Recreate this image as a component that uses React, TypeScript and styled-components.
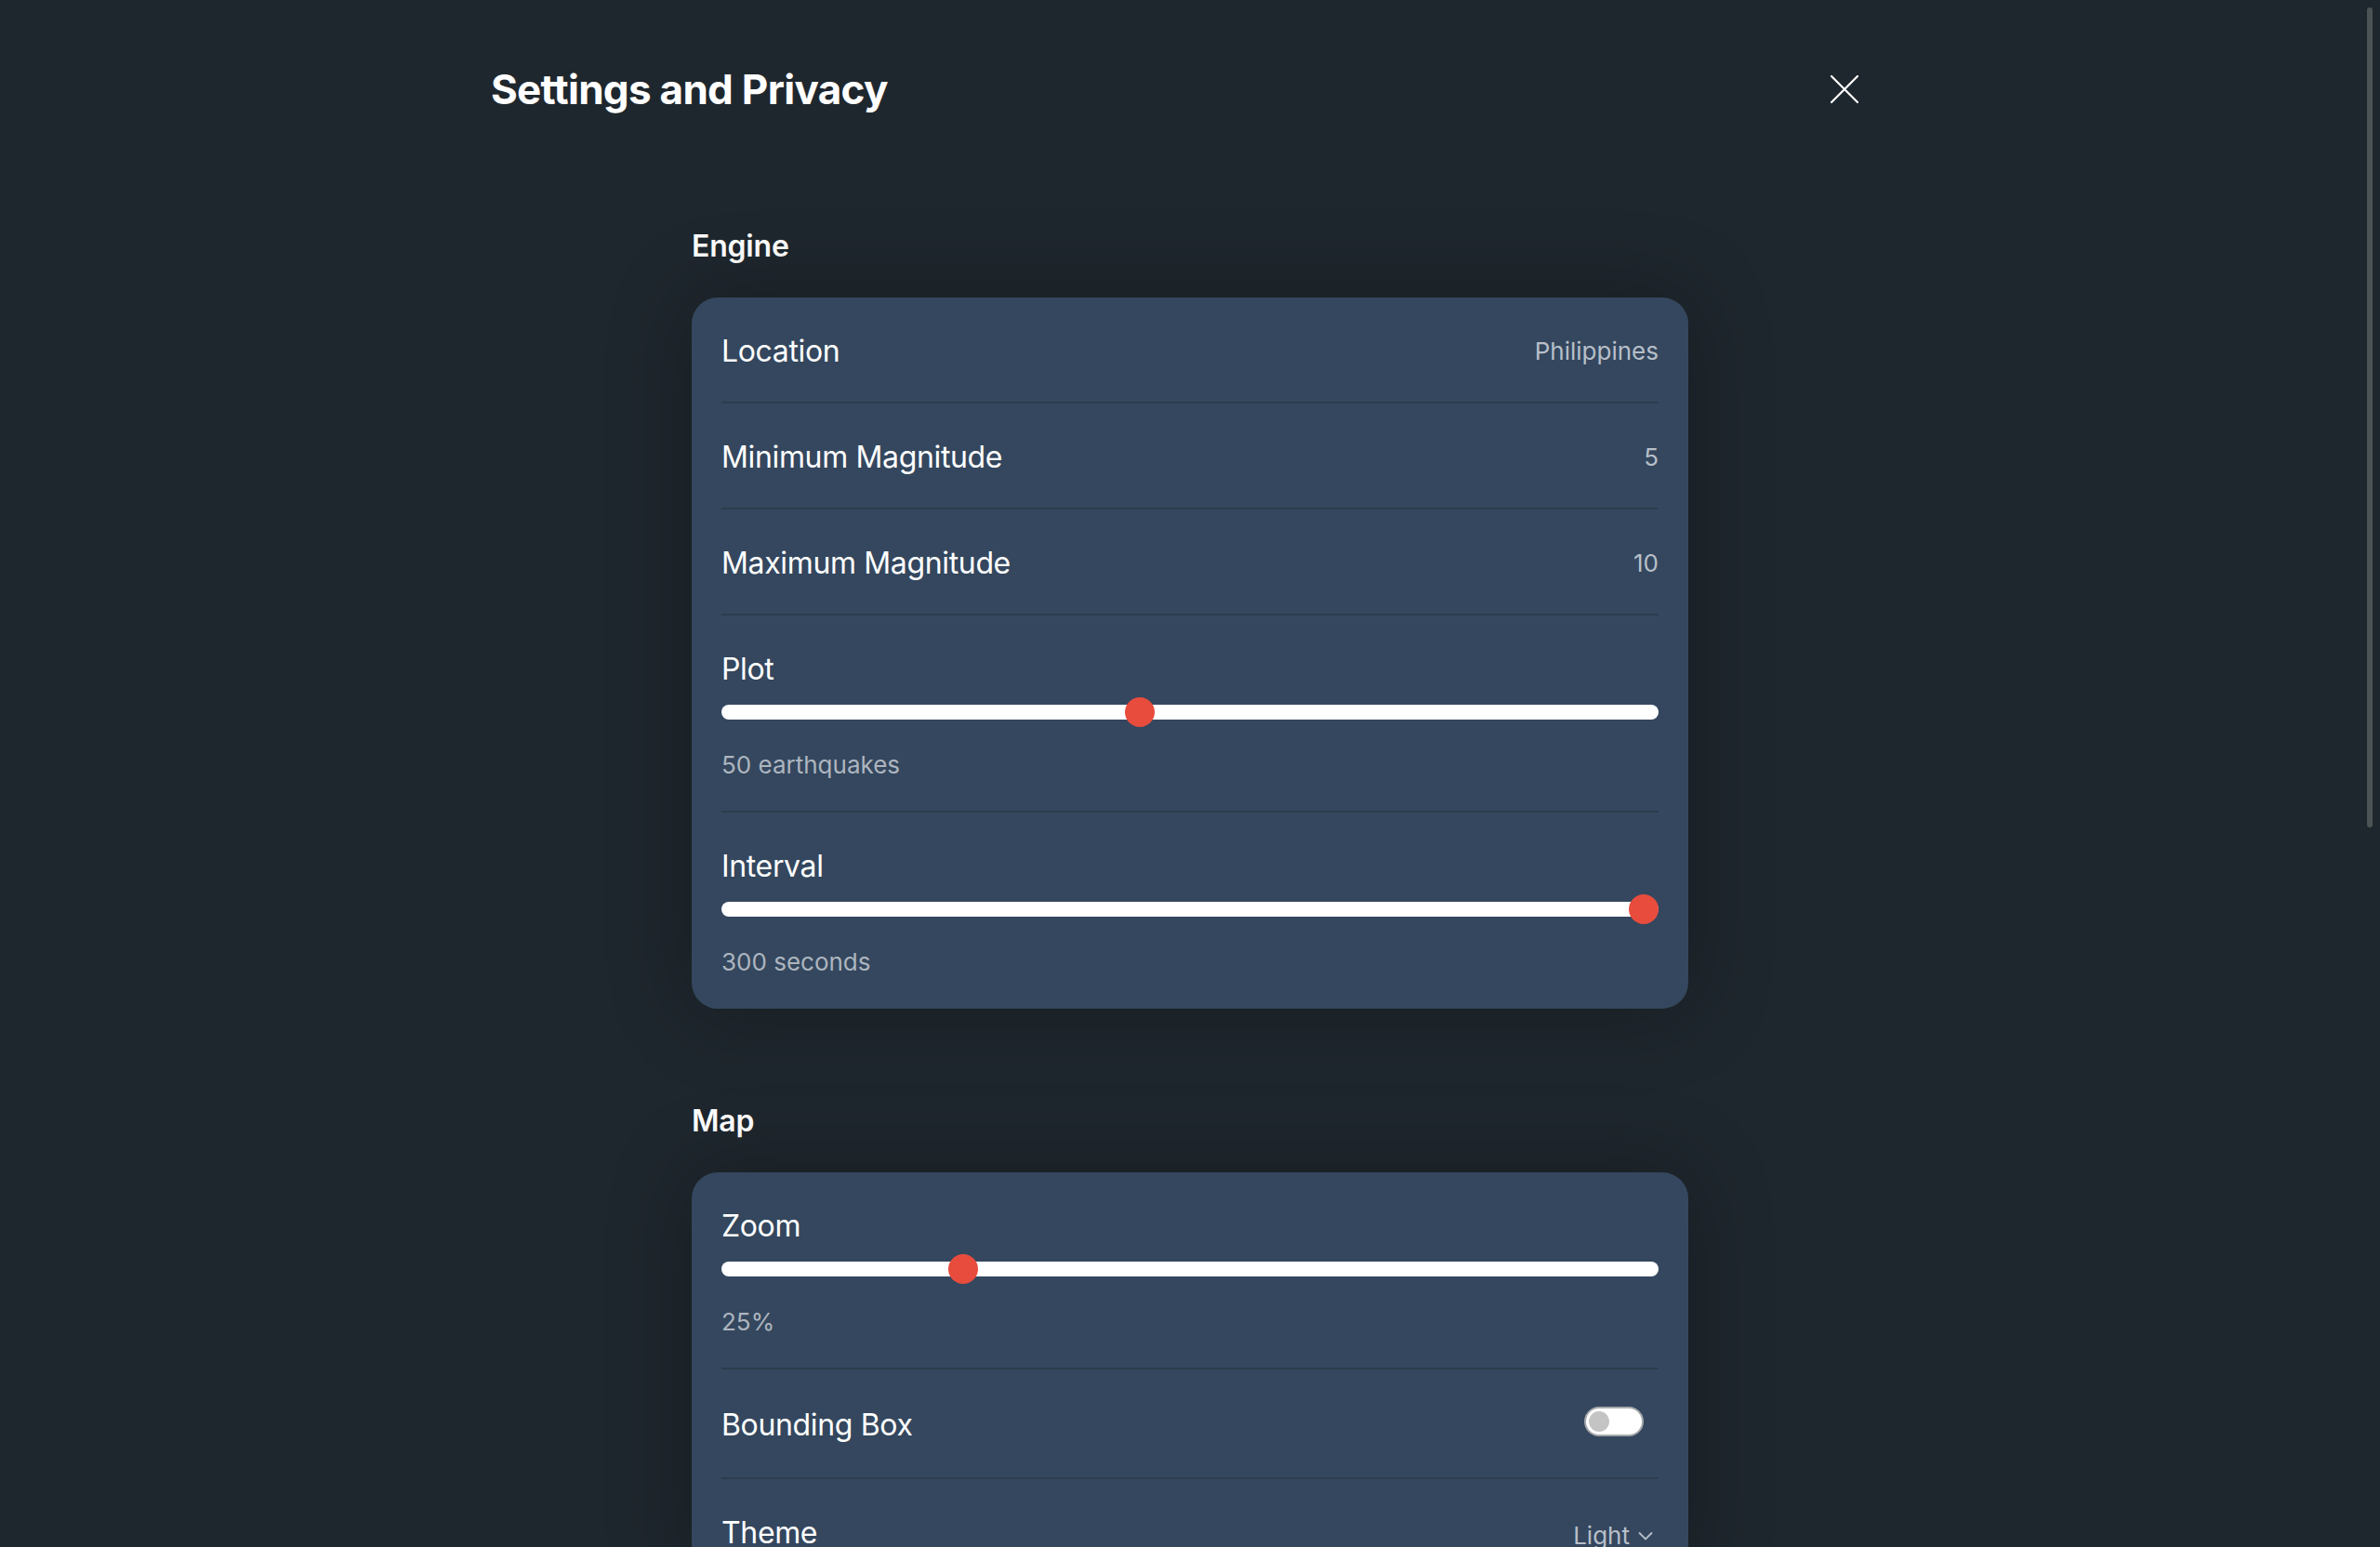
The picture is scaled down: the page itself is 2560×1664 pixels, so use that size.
import React from 'react';
import styled, { createGlobalStyle } from 'styled-components';

const GlobalStyle = createGlobalStyle`
  * {
    box-sizing: border-box;
  }
  html,
  body {
    margin: 0;
    padding: 0;
    background: #1f272e;
  }
  body {
    font-family: 'Inter', 'Noto Sans', sans-serif;
    color: #ffffff;
    -webkit-font-smoothing: antialiased;
  }
`;

const engineRows = [
  { id: 'location', title: 'Location', value: 'Philippines' },
  { id: 'min', title: 'Minimum Magnitude', value: '5' },
  { id: 'max', title: 'Maximum Magnitude', value: '10' },
];

const App: React.FC = () => {
  return (
    <Page>
      <GlobalStyle />
      <Header>
        <Title>Settings and Privacy</Title>
        <CloseButton aria-label="Close">
          <svg width="30" height="30" viewBox="0 0 30 30" fill="none">
            <path
              d="M1 1L29 29M29 1L1 29"
              stroke="#ffffff"
              strokeWidth="2.2"
              strokeLinecap="square"
            />
          </svg>
        </CloseButton>
      </Header>

      <Content>
        <Section>
          <SectionTitle>Engine</SectionTitle>
          <Card>
            {engineRows.map(row => (
              <Row key={row.id}>
                <Label>{row.title}</Label>
                <Value>{row.value}</Value>
              </Row>
            ))}
            <SliderRow>
              <Label>Plot</Label>
              <Range min={10} max={100} defaultValue={50} />
              <SubText>50 earthquakes</SubText>
            </SliderRow>
            <SliderRow>
              <Label>Interval</Label>
              <Range min={30} max={300} step={30} defaultValue={300} />
              <SubText>300 seconds</SubText>
            </SliderRow>
          </Card>
        </Section>

        <Section>
          <SectionTitle>Map</SectionTitle>
          <Card>
            <SliderRow>
              <Label>Zoom</Label>
              <Range min={0} max={100} defaultValue={25} />
              <SubText>25%</SubText>
            </SliderRow>
            <Row>
              <Label>Bounding Box</Label>
              <Switch role="switch" aria-checked={false} />
            </Row>
            <Row>
              <Label>Theme</Label>
              <Select>
                Light
                <svg width="16" height="10" viewBox="0 0 16 10" fill="none">
                  <path
                    d="M1 1.5L8 8.5L15 1.5"
                    stroke="#b7bfc9"
                    strokeWidth="1.8"
                  />
                </svg>
              </Select>
            </Row>
          </Card>
        </Section>
      </Content>

      <ScrollThumb />
    </Page>
  );
};

const Page = styled.div`
  position: relative;
  height: 100vh;
  overflow: hidden;
  background: #1f272e;
`;

const Header = styled.header`
  width: 1504px;
  margin: 0 auto;
  padding-top: 48px;
  display: flex;
  align-items: center;
  justify-content: space-between;
`;

const Title = styled.h1`
  margin: 0;
  font-size: 44px;
  font-weight: 700;
  line-height: 96px;
  letter-spacing: -0.7px;
`;

const CloseButton = styled.button`
  width: 96px;
  height: 96px;
  padding: 0;
  border: 0;
  background: none;
  display: flex;
  align-items: center;
  justify-content: center;
  cursor: pointer;
`;

const Content = styled.main`
  width: 1072px;
  margin: 101px auto 0;
  display: flex;
  flex-direction: column;
  gap: 101px;
`;

const Section = styled.section`
  display: flex;
  flex-direction: column;
`;

const SectionTitle = styled.h2`
  margin: 0 0 35px;
  font-size: 32px;
  font-weight: 600;
  line-height: 40px;
  letter-spacing: -0.2px;
`;

const Card = styled.div`
  background: #34475e;
  border-radius: 28px;
  padding: 0 32px;
  box-shadow: 0 0 90px rgba(0, 0, 0, 0.3);
`;

const Row = styled.div`
  display: flex;
  align-items: center;
  justify-content: space-between;
  padding: 38px 0 34px;
  border-bottom: 2px solid #2d3c4e;

  &:last-child {
    border-bottom: none;
  }
`;

const SliderRow = styled(Row)`
  flex-direction: column;
  align-items: stretch;
  justify-content: flex-start;
  padding: 38px 0 33px;

  &:last-child {
    padding-bottom: 34px;
  }
`;

const Label = styled.div`
  font-size: 32px;
  line-height: 40px;
  font-weight: 400;
  letter-spacing: -0.35px;
  color: #ffffff;
`;

const Value = styled.div`
  font-size: 26px;
  line-height: 32px;
  color: #b7bfc9;
`;

const SubText = styled.div`
  margin-top: 25px;
  font-size: 26px;
  line-height: 32px;
  color: #adb5bf;
`;

const Range = styled.input.attrs({ type: 'range' })`
  -webkit-appearance: none;
  appearance: none;
  display: block;
  width: 100%;
  height: 32px;
  margin: 10px 0 0;
  padding: 0;
  background: transparent;

  &::-webkit-slider-runnable-track {
    height: 16px;
    border-radius: 8px;
    background: #ffffff;
  }

  &::-webkit-slider-thumb {
    -webkit-appearance: none;
    width: 32px;
    height: 32px;
    margin-top: -8px;
    border: none;
    border-radius: 50%;
    background: #e84c3d;
  }
`;

const Switch = styled.span`
  position: relative;
  width: 64px;
  height: 32px;
  margin: 2px 16px 10px 0;
  border-radius: 16px;
  background: #ffffff;
  border: 2px solid #a6a8ab;

  &::after {
    content: '';
    position: absolute;
    top: 3px;
    left: 3px;
    width: 22px;
    height: 22px;
    border-radius: 50%;
    background: #c4c4c4;
  }
`;

const Select = styled.div`
  display: flex;
  align-items: center;
  gap: 9px;
  padding: 6px 6px 0 0;
  font-size: 26px;
  line-height: 32px;
  color: #b7bfc9;
`;

const ScrollThumb = styled.div`
  position: absolute;
  top: 8px;
  right: 8px;
  width: 6px;
  height: 882px;
  border-radius: 3px;
  background: #4b5354;
`;

export default App;
